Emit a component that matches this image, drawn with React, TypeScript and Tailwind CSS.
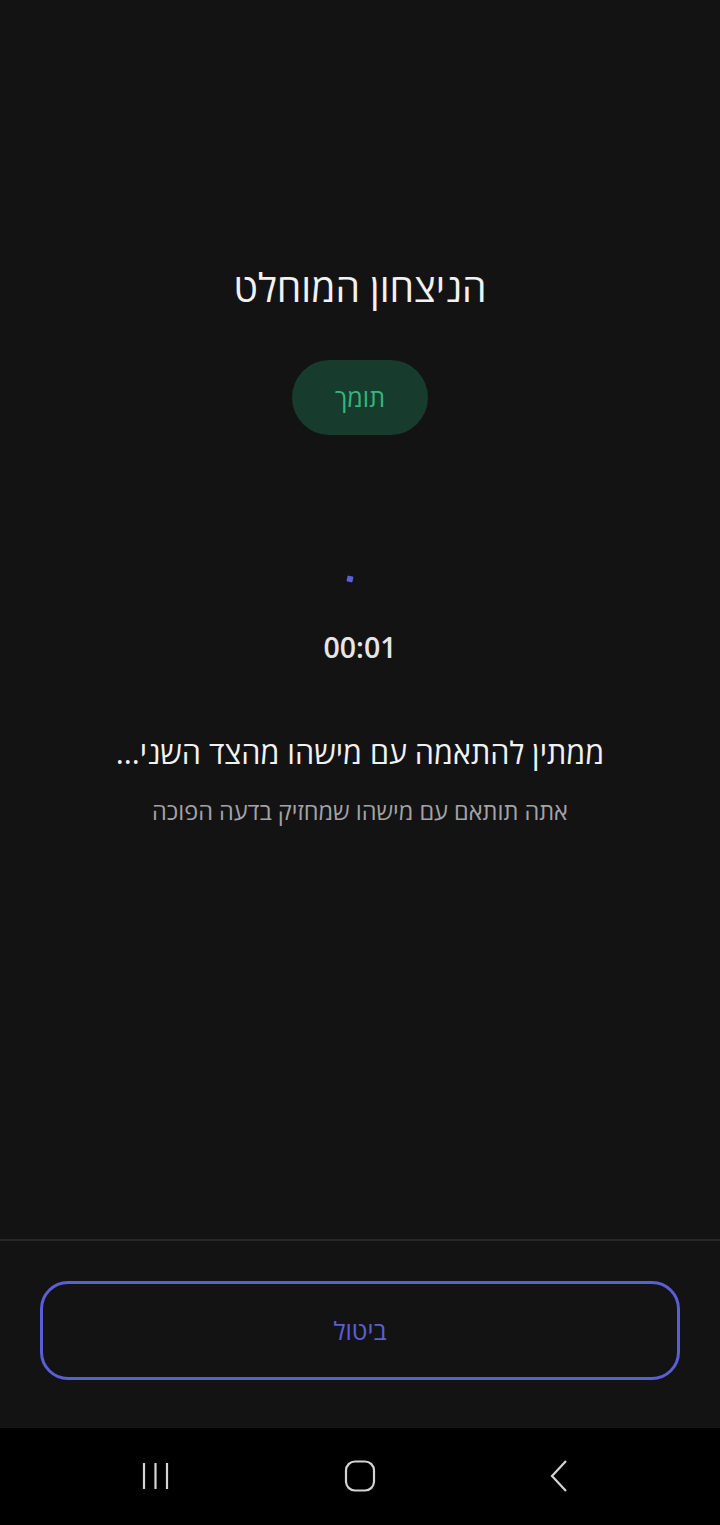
export default function App() {
  return (
    <div
      dir="rtl"
      className="flex h-[1525px] w-[720px] flex-col bg-[#131314] text-white"
      style={{ fontFamily: '"Open Sans", "DejaVu Sans", sans-serif' }}
    >
      <main className="flex flex-1 flex-col items-center">
        <h1 className="mt-[262px] text-[39px] leading-[50px] font-normal text-[#f2f2f2]">
          הניצחון המוחלט
        </h1>
        <div className="mt-[48px] flex h-[75px] w-[136px] items-center justify-center rounded-full bg-[#173c2e] text-[25px] text-[#33b580]">
          תומך
        </div>

        <div className="mt-[138px] flex h-[12px] w-[12px] items-center justify-center">
          <span className="h-[6px] w-[6px] translate-x-[-10px] rotate-12 rounded-[1px] bg-[#5b5fe0]" />
        </div>

        <p
          dir="ltr"
          className="mt-[44px] text-[28.5px] leading-[36px] font-semibold text-[#e6e6e6]"
        >
          00:01
        </p>

        <h2 className="mt-[67px] text-[30.5px] leading-[40px] text-[#f2f2f2]">
          ממתין להתאמה עם מישהו מהצד השני...
        </h2>
        <p className="mt-[24px] text-[23.5px] leading-[30px] text-[#a3a3a8]">
          אתה תותאם עם מישהו שמחזיק בדעה הפוכה
        </p>
      </main>

      <footer className="border-t-2 border-[#26272a] px-[40px] pt-[40px] pb-[48px]">
        <button className="flex h-[99px] w-full items-center justify-center rounded-[28px] border-[3px] border-[#5a5fd8] text-[25px] text-[#5a5fd8]">
          ביטול
        </button>
      </footer>

      <nav dir="ltr" className="flex h-[97px] items-center bg-black">
        <div className="flex w-full items-center justify-center gap-[172px] pb-[2px]">
          <svg width="32" height="32" viewBox="0 0 32 32" fill="none" stroke="#d4d4d4" strokeWidth="2.2">
            <path d="M4 3v26M15.5 3v26M27 3v26" />
          </svg>
          <svg width="32" height="32" viewBox="0 0 32 32" fill="none" stroke="#d4d4d4" strokeWidth="2.2">
            <rect x="2" y="1.5" width="28" height="29" rx="9" />
          </svg>
          <svg width="32" height="34" viewBox="0 0 32 34" fill="none" stroke="#d4d4d4" strokeWidth="2.2">
            <path d="M18 2L4 17l14 15" />
          </svg>
        </div>
      </nav>
    </div>
  );
}
